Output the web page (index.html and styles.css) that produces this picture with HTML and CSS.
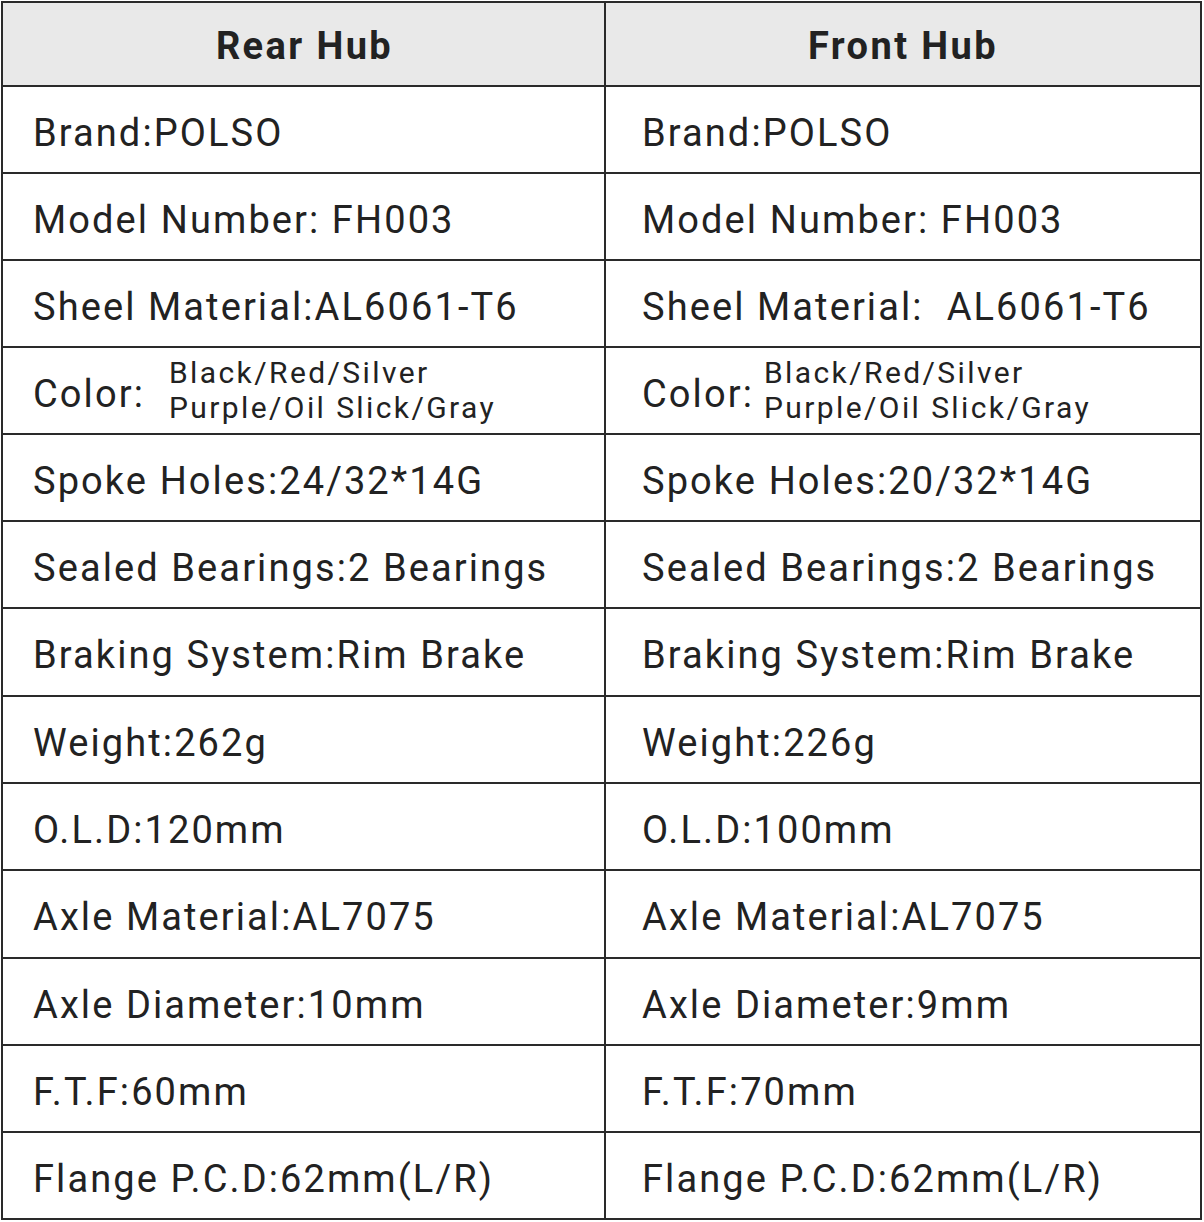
FILE: index.html
```html
<!DOCTYPE html>
<html>
<head>
<meta charset="utf-8">
<link rel="stylesheet" href="styles.css">
</head>
<body>
<div class="sheet">
  <div class="row head">
    <div class="cell left">Rear Hub</div>
    <div class="cell right">Front Hub</div>
  </div>
  <div class="row">
    <div class="cell left">Brand:POLSO</div>
    <div class="cell right">Brand:POLSO</div>
  </div>
  <div class="row">
    <div class="cell left">Model Number: FH003</div>
    <div class="cell right">Model Number: FH003</div>
  </div>
  <div class="row">
    <div class="cell left">Sheel Material:AL6061-T6</div>
    <div class="cell right">Sheel Material:&nbsp; AL6061-T6</div>
  </div>
  <div class="row">
    <div class="cell left color-cell"><span class="color-label">Color:</span><span class="color-list"><span>Black/Red/Silver</span><span>Purple/Oil Slick/Gray</span></span></div>
    <div class="cell right color-cell narrow"><span class="color-label">Color:</span><span class="color-list"><span>Black/Red/Silver</span><span>Purple/Oil Slick/Gray</span></span></div>
  </div>
  <div class="row">
    <div class="cell left">Spoke Holes:24/32*14G</div>
    <div class="cell right">Spoke Holes:20/32*14G</div>
  </div>
  <div class="row">
    <div class="cell left">Sealed Bearings:2 Bearings</div>
    <div class="cell right">Sealed Bearings:2 Bearings</div>
  </div>
  <div class="row tall">
    <div class="cell left">Braking System:Rim Brake</div>
    <div class="cell right">Braking System:Rim Brake</div>
  </div>
  <div class="row">
    <div class="cell left">Weight:262g</div>
    <div class="cell right">Weight:226g</div>
  </div>
  <div class="row">
    <div class="cell left">O.L.D:120mm</div>
    <div class="cell right">O.L.D:100mm</div>
  </div>
  <div class="row tall">
    <div class="cell left">Axle Material:AL7075</div>
    <div class="cell right">Axle Material:AL7075</div>
  </div>
  <div class="row">
    <div class="cell left">Axle Diameter:10mm</div>
    <div class="cell right">Axle Diameter:9mm</div>
  </div>
  <div class="row">
    <div class="cell left">F.T.F:60mm</div>
    <div class="cell right">F.T.F:70mm</div>
  </div>
  <div class="row">
    <div class="cell left">Flange P.C.D:62mm(L/R)</div>
    <div class="cell right">Flange P.C.D:62mm(L/R)</div>
  </div>
</div>
</body>
</html>
```
FILE: styles.css
```css
html, body {
  margin: 0;
  padding: 0;
  background: #ffffff;
}
body {
  font-family: Roboto, "Liberation Sans", sans-serif;
  color: #222222;
}
.sheet {
  margin: 1px 0 0 1px;
  width: 1197px;
  border: 2px solid #2a2a2a;
}
.row {
  display: flex;
  height: 85px;
  border-bottom: 2px solid #2a2a2a;
}
.row.tall {
  height: 86px;
}
.row:last-child {
  border-bottom: none;
}
.row.head {
  height: 82px;
  background: #e9e9e9;
}
.cell {
  display: flex;
  align-items: center;
  font-size: 38px;
  letter-spacing: 2.1px;
  padding-top: 6px;
  box-sizing: border-box;
  white-space: pre;
}
.cell.left {
  width: 603px;
  padding-left: 30px;
  border-right: 2px solid #2a2a2a;
}
.cell.right {
  flex: 1;
  padding-left: 36px;
}
.head .cell {
  justify-content: center;
  padding-left: 0;
  font-weight: 700;
  letter-spacing: 2.4px;
  padding-top: 4px;
}
.head .cell.left {
  padding-left: 2px;
}
.color-cell {
  gap: 24px;
}
.color-cell.narrow {
  gap: 10px;
}
.color-list {
  display: flex;
  flex-direction: column;
  font-size: 30px;
  letter-spacing: 2.4px;
  line-height: 35px;
  margin-top: -8px;
}
```
